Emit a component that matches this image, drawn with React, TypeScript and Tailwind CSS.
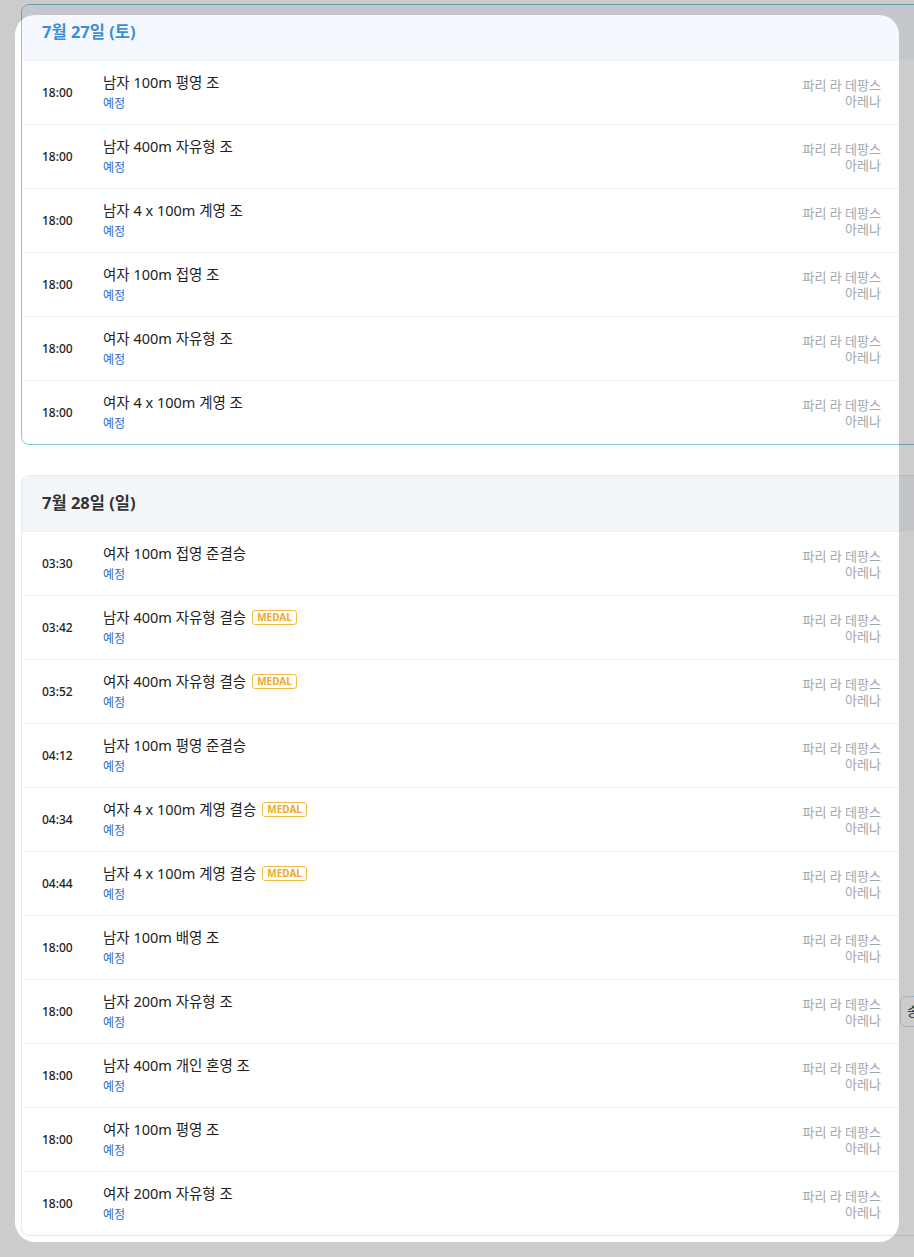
import React from "react";

type Ev = { time: string; name: string; medal?: boolean };

const day1: Ev[] = [
  { time: "18:00", name: "남자 100m 평영 조" },
  { time: "18:00", name: "남자 400m 자유형 조" },
  { time: "18:00", name: "남자 4 x 100m 계영 조" },
  { time: "18:00", name: "여자 100m 접영 조" },
  { time: "18:00", name: "여자 400m 자유형 조" },
  { time: "18:00", name: "여자 4 x 100m 계영 조" },
];

const day2: Ev[] = [
  { time: "03:30", name: "여자 100m 접영 준결승" },
  { time: "03:42", name: "남자 400m 자유형 결승", medal: true },
  { time: "03:52", name: "여자 400m 자유형 결승", medal: true },
  { time: "04:12", name: "남자 100m 평영 준결승" },
  { time: "04:34", name: "여자 4 x 100m 계영 결승", medal: true },
  { time: "04:44", name: "남자 4 x 100m 계영 결승", medal: true },
  { time: "18:00", name: "남자 100m 배영 조" },
  { time: "18:00", name: "남자 200m 자유형 조" },
  { time: "18:00", name: "남자 400m 개인 혼영 조" },
  { time: "18:00", name: "여자 100m 평영 조" },
  { time: "18:00", name: "여자 200m 자유형 조" },
];

function Row({ ev }: { ev: Ev }) {
  return (
    <div className="flex h-[64px] w-[877px] items-center border-t border-[#eef0f3] pl-[20px] pr-[18px]">
      <div className="w-[61px] text-[12px] font-medium text-[#222]">{ev.time}</div>
      <div className="flex flex-1 flex-col">
        <div className="flex items-center text-[14.5px] leading-[20px] text-[#222]">
          <span>{ev.name}</span>
          {ev.medal && (
            <span className="ml-[6px] rounded-[3px] border border-[#f2bb45] px-[4px] text-[10px] font-bold leading-[13px] text-[#f0a92a]">
              MEDAL
            </span>
          )}
        </div>
        <div className="mt-[3px] text-[12px] leading-[18px] text-[#2f6bd1]">예정</div>
      </div>
      <div className="w-[86px] text-right text-[13px] leading-[16px] text-[#a3a7ae]">
        파리 라 데팡스 아레나
      </div>
    </div>
  );
}

function Card({
  title,
  events,
  active,
}: {
  title: string;
  events: Ev[];
  active?: boolean;
}) {
  return (
    <div
      className={
        active
          ? "w-[1000px] overflow-hidden rounded-[8px] border border-[#8ec4da] bg-white"
          : "w-[1000px] overflow-hidden rounded-[8px] border border-[#e6eaee] bg-white"
      }
    >
      <div
        className={
          active
            ? "flex h-[55px] items-center bg-[#f5f9ff] pl-[20px]"
            : "flex h-[55px] items-center bg-[#f3f6f9] pl-[20px]"
        }
      >
        <span
          className={
            active
              ? "text-[16.5px] font-bold text-[#3a8fd6]"
              : "text-[16.5px] font-bold text-[#333]"
          }
        >
          {title}
        </span>
      </div>
      {events.map((ev, i) => (
        <Row key={i} ev={ev} />
      ))}
    </div>
  );
}

export default function App() {
  return (
    <div
      className="relative h-[1257px] w-[914px] overflow-hidden bg-white"
      style={{ fontFamily: '"Noto Sans", "Noto Sans CJK KR", sans-serif' }}
    >
      <div className="flex flex-col gap-[30px] pl-[21px] pt-[4px]">
        <Card title="7월 27일 (토)" events={day1} active />
        <Card title="7월 28일 (일)" events={day2} />
      </div>
      <div className="absolute left-[900px] top-[996px] flex h-[31px] w-[36px] items-center rounded-[6px] border border-[#d8dbe0] bg-white pl-[6px] text-[13px] text-[#333]">
        송
      </div>
      <div className="pointer-events-none absolute left-[15px] top-[15px] h-[1227px] w-[884px] rounded-[20px] shadow-[0_0_0_2000px_rgba(0,0,0,0.2)]" />
    </div>
  );
}
